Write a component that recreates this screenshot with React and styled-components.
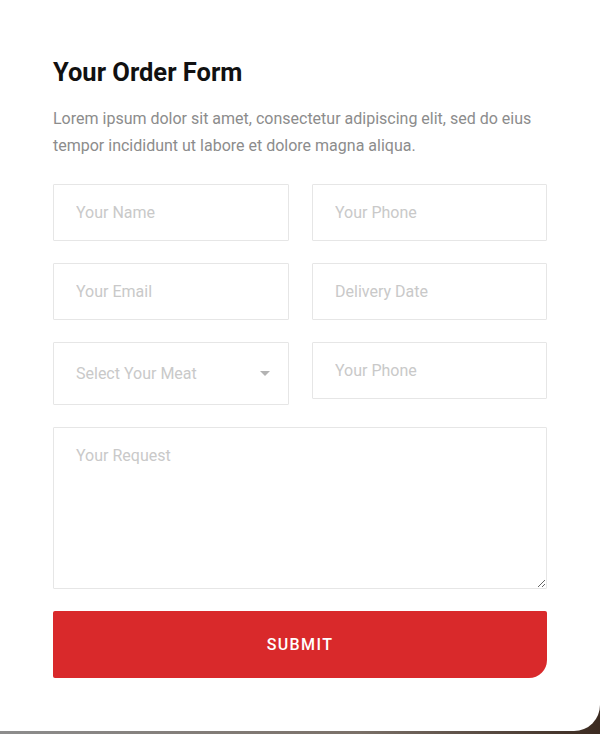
import React from 'react';
import styled, { createGlobalStyle } from 'styled-components';

const Global = createGlobalStyle`
	* { box-sizing: border-box; }
	html, body { margin: 0; padding: 0; }
	body { font-family: Roboto, "Liberation Sans", Arial, sans-serif; }
	::placeholder { color: #c9c9c9; opacity: 1; }
`;

const Page = styled.div`
	width: 600px;
	height: 734px;
	background: linear-gradient(to right, #8d8d8d 0%, #7a7068 60%, #3b2a20 100%);
	overflow: hidden;
`;

const Card = styled.div`
	width: 600px;
	height: 731px;
	background: #fff;
	border-bottom-right-radius: 26px;
	padding: 56px 53px 0;
`;

const Title = styled.h2`
	margin: 0;
	font-size: 25.5px;
	line-height: 32px;
	font-weight: 700;
	color: #111;
`;

const Intro = styled.p`
	margin: 17px 0 25px;
	font-size: 16px;
	line-height: 27px;
	color: #8c8c8c;
`;

const Grid = styled.form`
	display: grid;
	grid-template-columns: 236px 235px;
	column-gap: 23px;
	row-gap: 22px;
	align-items: start;
`;

const Field = styled.input`
	display: block;
	width: 100%;
	height: 57px;
	border: 1px solid #e6e6e6;
	border-radius: 1px;
	padding: 0 22px;
	font-family: inherit;
	font-size: 16px;
	color: #555;
	outline: none;
	background: #fff;
`;

const SelectWrap = styled.div`
	position: relative;
	height: 63px;
`;

const Select = styled.select`
	appearance: none;
	width: 100%;
	height: 100%;
	border: 1px solid #e6e6e6;
	border-radius: 1px;
	padding: 0 22px;
	font-family: inherit;
	font-size: 16px;
	color: #c9c9c9;
	background: #fff;
	outline: none;
`;

const Caret = styled.span`
	position: absolute;
	right: 19px;
	top: 29px;
	width: 0;
	height: 0;
	border-left: 5px solid transparent;
	border-right: 5px solid transparent;
	border-top: 5px solid #b3b3b3;
	pointer-events: none;
`;

const Request = styled.textarea`
	grid-column: 1 / -1;
	display: block;
	width: 100%;
	height: 162px;
	border: 1px solid #e6e6e6;
	border-radius: 1px;
	padding: 18px 22px;
	font-family: inherit;
	font-size: 16px;
	outline: none;
	resize: vertical;
`;

const Submit = styled.button`
	grid-column: 1 / -1;
	height: 67px;
	border: none;
	border-radius: 2px 2px 18px 2px;
	background: #d9292b;
	color: #fff;
	font-family: inherit;
	font-size: 16px;
	font-weight: 500;
	letter-spacing: 1.4px;
	text-transform: uppercase;
	cursor: pointer;
`;

const App = () => {
	return (
		<Page>
			<Global />
			<Card>
				<Title>Your Order Form</Title>
				<Intro>
					Lorem ipsum dolor sit amet, consectetur adipiscing elit, sed do eius tempor incididunt ut labore et dolore magna aliqua.
				</Intro>
				<Grid onSubmit={(e) => e.preventDefault()}>
					<Field placeholder="Your Name" />
					<Field placeholder="Your Phone" />
					<Field placeholder="Your Email" />
					<Field placeholder="Delivery Date" />
					<SelectWrap>
						<Select defaultValue="">
							<option value="" disabled>Select Your Meat</option>
							<option>Beef</option>
							<option>Chicken</option>
							<option>Lamb</option>
						</Select>
						<Caret />
					</SelectWrap>
					<Field placeholder="Your Phone" />
					<Request placeholder="Your Request" />
					<Submit type="submit">Submit</Submit>
				</Grid>
			</Card>
		</Page>
	);
};

export default App;
